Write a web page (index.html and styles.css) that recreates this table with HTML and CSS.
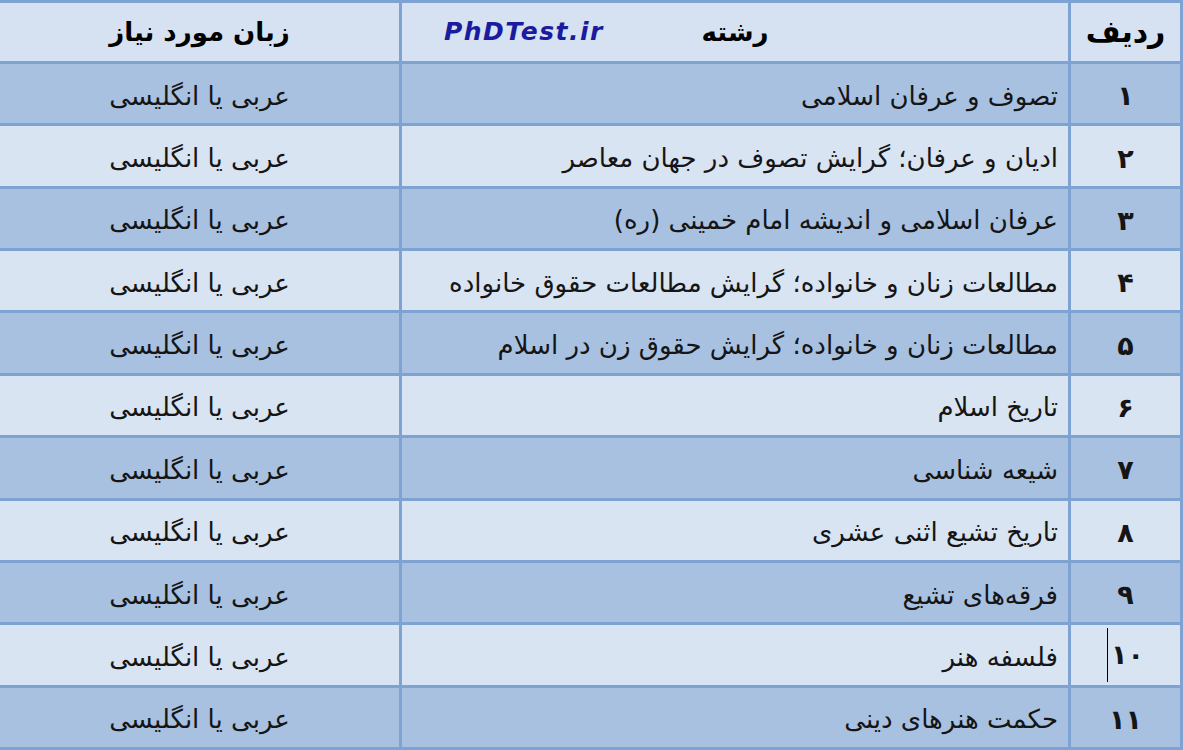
FILE: index.html
```html
<!DOCTYPE html>
<html lang="fa" dir="rtl">
<head>
<meta charset="utf-8">
<link rel="stylesheet" href="styles.css">
</head>
<body>
<table class="grid">
  <colgroup>
    <col class="c-num">
    <col class="c-field">
    <col class="c-lang">
  </colgroup>
  <thead>
    <tr class="head">
      <th class="num">ردیف</th>
      <th class="field"><span class="field-title">رشته</span><span class="logo" dir="ltr">PhDTest.ir</span></th>
      <th class="lang">زبان مورد نیاز</th>
    </tr>
  </thead>
  <tbody>
    <tr class="dark"><td class="num">۱</td><td class="field">تصوف و عرفان اسلامی</td><td class="lang">عربی یا انگلیسی</td></tr>
    <tr class="light"><td class="num">۲</td><td class="field">ادیان و عرفان؛ گرایش تصوف در جهان معاصر</td><td class="lang">عربی یا انگلیسی</td></tr>
    <tr class="dark"><td class="num">۳</td><td class="field">عرفان اسلامی و اندیشه امام خمینی (ره)</td><td class="lang">عربی یا انگلیسی</td></tr>
    <tr class="light"><td class="num">۴</td><td class="field">مطالعات زنان و خانواده؛ گرایش مطالعات حقوق خانواده</td><td class="lang">عربی یا انگلیسی</td></tr>
    <tr class="dark"><td class="num">۵</td><td class="field">مطالعات زنان و خانواده؛ گرایش حقوق زن در اسلام</td><td class="lang">عربی یا انگلیسی</td></tr>
    <tr class="light"><td class="num">۶</td><td class="field">تاریخ اسلام</td><td class="lang">عربی یا انگلیسی</td></tr>
    <tr class="dark"><td class="num">۷</td><td class="field">شیعه شناسی</td><td class="lang">عربی یا انگلیسی</td></tr>
    <tr class="light"><td class="num">۸</td><td class="field">تاریخ تشیع اثنی عشری</td><td class="lang">عربی یا انگلیسی</td></tr>
    <tr class="dark"><td class="num">۹</td><td class="field">فرقه‌های تشیع</td><td class="lang">عربی یا انگلیسی</td></tr>
    <tr class="light"><td class="num"><span class="cursor">۱۰</span></td><td class="field">فلسفه هنر</td><td class="lang">عربی یا انگلیسی</td></tr>
    <tr class="dark"><td class="num">۱۱</td><td class="field">حکمت هنرهای دینی</td><td class="lang">عربی یا انگلیسی</td></tr>
  </tbody>
</table>
</body>
</html>
```
FILE: styles.css
```css
html, body {
  margin: 0;
  padding: 0;
  background: #d9e4f2;
  overflow: hidden;
}
.grid {
  width: 1183px;
  height: 750px;
  border-collapse: collapse;
  table-layout: fixed;
  font-family: "DejaVu Sans", "Noto Sans", sans-serif;
  color: #151515;
}
.c-num { width: 112px; }
.c-field { width: 669px; }
.c-lang { width: 402px; }
.grid th, .grid td {
  border: 3px solid #7ea2d2;
  height: 52px;
  padding: 4px 10px 0;
  vertical-align: middle;
  font-size: 26px;
  line-height: 1;
}
.head th {
  background: #d6e2f1;
  font-weight: bold;
  color: #000;
  font-size: 26px;
  height: 58px;
  padding-top: 0;
}
.head th.num { font-size: 30px; padding: 0 6px; }
.dark td { background: #a8c1e1; }
.light td { background: #d9e4f2; }
.num { text-align: center; }
td.num { font-weight: bold; font-size: 27px; }
td.field { text-align: right; }
.lang { text-align: center; }
th.field {
  position: relative;
  text-align: center;
}
.field-title { display: inline-block; }
.logo {
  position: absolute;
  left: 42px;
  top: 16px;
  font-family: "DejaVu Sans", sans-serif;
  font-style: italic;
  font-weight: 900;
  font-size: 25px;
  color: #1b1ba0;
  letter-spacing: 1.5px;
}
.cursor {
  display: inline-block;
  border-left: 1px solid #000;
  padding-left: 3px;
  line-height: 54px;
  vertical-align: middle;
  margin-top: -4px;
}
```
